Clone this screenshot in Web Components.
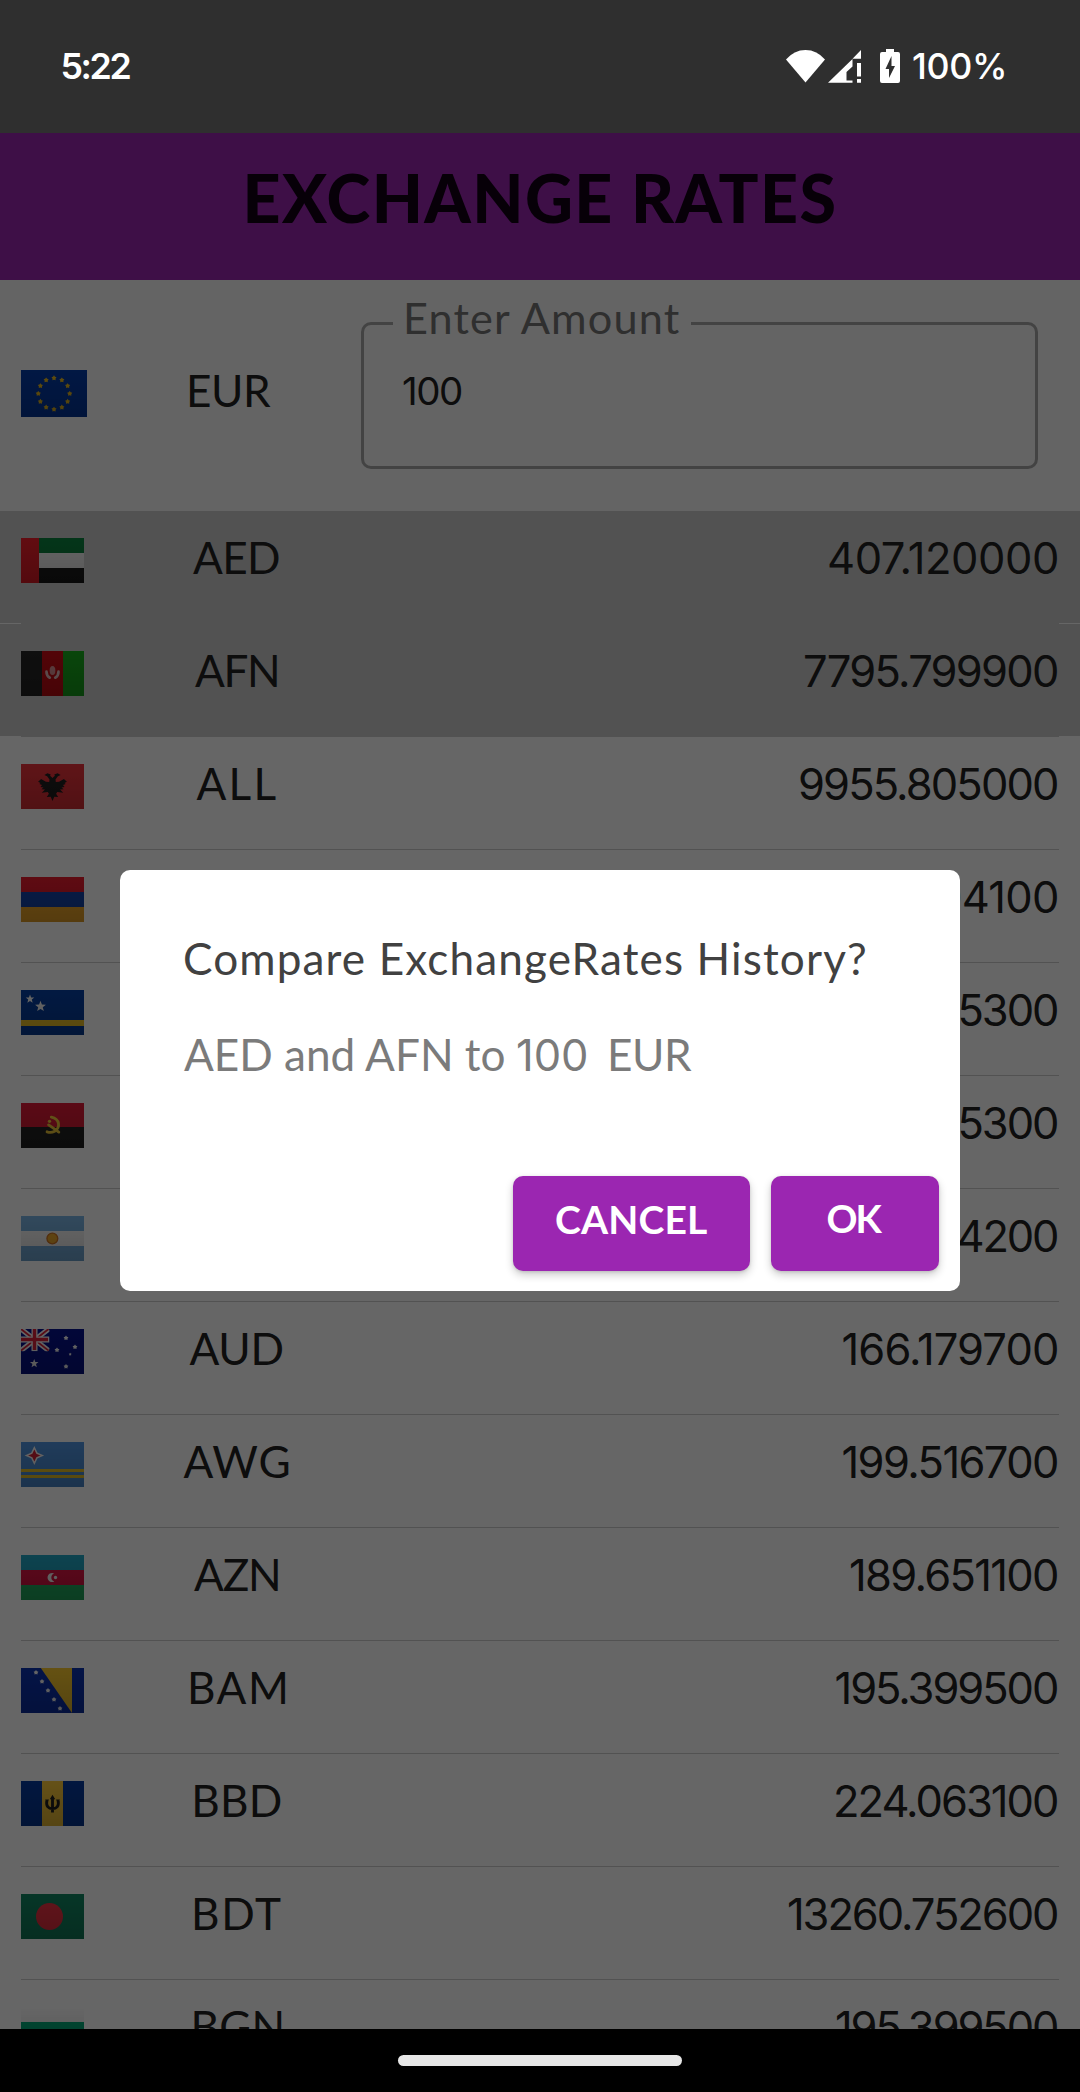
<!DOCTYPE html>
<html lang="en">
<head>
<meta charset="utf-8">
<title>Exchange Rates</title>
<style>
html,body{margin:0;height:2092px;overflow:hidden;background:#000;font-family:Lato,"Open Sans",sans-serif;color:#212121}
</style>
</head>
<body>
<app-screen></app-screen>
<script>
const make = (tag, html, setup) => customElements.define(tag, class extends HTMLElement {
  connectedCallback() {
    if (this.shadowRoot) return;
    const root = this.attachShadow({mode: 'open'});
    root.innerHTML = typeof html === 'function' ? html(this) : html;
    if (setup) setup(this, root);
  }
});

// A line of text set to a given ink width and cap height.
const pen = document.createElement('canvas').getContext('2d');
const CAPS = {Lato: 0.7165, Inter: 0.727};
make('type-line', '<style>:host{display:block;flex:none;white-space:pre}span{display:block;white-space:pre;width:max-content;font-kerning:normal}</style><span></span>', (el, root) => {
  const face = el.getAttribute('face') || 'Lato';
  const weight = el.getAttribute('weight') || '400';
  const cap = +el.getAttribute('cap') || 31.6;
  const width = +el.getAttribute('w');
  const size = cap / CAPS[face];
  const text = el.getAttribute('text');
  const span = root.querySelector('span');
  span.textContent = text;
  pen.font = `${weight} ${size}px ${face}`;
  const m = pen.measureText(text);
  const ink = m.actualBoundingBoxLeft + m.actualBoundingBoxRight;
  const gap = (width - ink) / (text.length - 1);
  const asc = m.fontBoundingBoxAscent, desc = m.fontBoundingBoxDescent;
  const base = (cap - asc - desc) / 2 + asc;
  Object.assign(el.style, {width: width + 'px', height: cap + 'px'});
  span.style.cssText = `font:${weight} ${size}px/${cap}px ${face},sans-serif;letter-spacing:${gap}px;transform:translate(${m.actualBoundingBoxLeft}px,${cap - base}px)`;
});

const band = (c, x, y, w, h) => `<rect x="${x}" y="${y}" width="${w}" height="${h}" fill="${c}"/>`;
const star = (x, y, r, c = '#fff', inner = .42) => {
  let p = '';
  for (let i = 0; i < 10; i++) {
    const a = Math.PI * i / 5, k = i % 2 ? r * inner : r;
    p += `${(x + k * Math.sin(a)).toFixed(2)},${(y - k * Math.cos(a)).toFixed(2)} `;
  }
  return `<polygon points="${p}" fill="${c}"/>`;
};
const ring = () => {
  let s = '';
  for (let i = 0; i < 12; i++) {
    const a = Math.PI * i / 6;
    s += star(10.5 + 5 * Math.sin(a), 7.55 - 5 * Math.cos(a), .85, '#f0c022', .62);
  }
  return s;
};
const FLAGS = {
  EUR: band('#043caa', 0, 0, 21, 15) + ring(),
  AED: band('#0b8540', 0, 0, 21, 5) + band('#fff', 0, 5, 21, 5) + band('#1c1c1c', 0, 10, 21, 5) + band('#f51f2b', 0, 0, 6, 15),
  AFN: band('#262626', 0, 0, 7, 15) + band('#cf0c14', 7, 0, 7, 15) + band('#18ae1d', 14, 0, 7, 15) + '<ellipse cx="10.5" cy="6.5" rx=".95" ry="1.5" fill="#e89a9d"/><path d="M8.5 6.9Q8.5 8.3 9.6 8.9M12.5 6.9Q12.5 8.3 11.4 8.9" fill="none" stroke="#f1c9ca" stroke-width=".9" stroke-linecap="round"/>',
  ALL: band('#ee343c', 0, 0, 21, 15) + '<path d="M10.5 4.7L9.7 3.9 9.9 3.5 8.8 3.1 7.8 3.7 8.7 4.1 9.5 5.2 9.4 6 8.3 5.9 6.7 5 5.7 5.9 6.5 6.3 6.1 6.7 7 7 6.5 7.7 7.5 7.8 6.8 8.4 8 8.5 6.9 9.6 8.9 9.3 9.3 9.9 8.6 11 9.9 10.9 10.5 12.3 11.1 10.9 12.4 11 11.7 9.9 12.1 9.3 14.1 9.6 13 8.5 14.2 8.4 13.5 7.8 14.5 7.7 14 7 14.9 6.7 14.5 6.3 15.3 5.9 14.3 5 12.7 5.9 11.6 6 11.5 5.2 12.3 4.1 13.2 3.7 12.2 3.1 11.1 3.5 11.3 3.9Z" fill="#202020"/>',
  AMD: band('#ec1c2e', 0, 0, 21, 5) + band('#1747b0', 0, 5, 21, 5) + band('#fcb02c', 0, 10, 21, 5),
  ANG: band('#0640a4', 0, 0, 21, 15) + band('#ffd02c', 0, 10, 21, 2) + star(3, 3, 1.5) + star(6.5, 5.5, 1.9),
  AOA: band('#e21b37', 0, 0, 21, 8) + band('#252525', 0, 8, 21, 7) + '<path d="M10.1 4.7C13 5.3 13.2 8.2 11.2 9.4Q10 10.1 8.7 9.6M9.2 7.3Q10.7 8.3 12.6 9.7" fill="none" stroke="#ffd53e" stroke-width=".95" stroke-linecap="round"/><circle cx="9.5" cy="6.1" r=".55" fill="#ffd53e"/>',
  ARS: band('#7cb6e6', 0, 0, 21, 15) + band('#fff', 0, 5, 21, 5) + '<circle cx="10.45" cy="7.5" r="1.8" fill="#fbb42f" stroke="#db7c26" stroke-width=".45"/>',
  AUD: band('#07128e', 0, 0, 21, 15) + '<svg width="9.5" height="7.4" viewBox="0 0 9.5 7.4"><path d="M0 0L9.2 7.2M9.2 0L0 7.2" stroke="#fff" stroke-width="1.7"/><path d="M0 0L9.2 7.2M9.2 0L0 7.2" stroke="#e0233c" stroke-width=".6"/><path d="M4.5 0V7.4M0 3.5H9.5" stroke="#fff" stroke-width="2"/><path d="M4.5 0V7M0 3.5H9" stroke="#e0233c" stroke-width="1.15"/></svg>' + star(4.4, 11.5, 1.5) + star(15, 3, .85, '#fff', .62) + star(18, 6, .85, '#fff', .62) + star(12, 7, .85, '#fff', .62) + star(16.4, 8.4, .5, '#fff', .62) + star(15, 12.5, .85, '#fff', .62),
  AWG: band('#5196e2', 0, 0, 21, 15) + band('#fbd02c', 0, 9, 21, 1) + band('#fbd02c', 0, 11, 21, 1) + '<path d="M4.45 1.9L5.3 3.7 7.1 4.5 5.3 5.3 4.45 7.1 3.6 5.3 1.8 4.5 3.6 3.7Z" fill="#dc2339" stroke="#fff" stroke-width=".5"/>',
  AZN: band('#22a8c6', 0, 0, 21, 5) + band('#e41545', 0, 5, 21, 5) + band('#23b564', 0, 10, 21, 5) + '<path d="M11.1 6.2A1.5 1.5 0 1 0 11.1 8.8A1.35 1.35 0 0 1 11.1 6.2Z" fill="#fff"/><circle cx="11.5" cy="7.5" r=".55" fill="#fff"/>',
  BAM: band('#0c32b0', 0, 0, 21, 15) + '<path d="M6.6 0H17V15Z" fill="#fccb30"/>' + [0, 1, 2, 3, 4].map(i => star(5 + 2 * i, 1.5 + 3 * i, .85, '#fff', .62)).join(''),
  BBD: band('#063a9e', 0, 0, 21, 15) + band('#fcca3c', 7, 0, 7, 15) + '<path d="M10.5 5.4V10.5M8.6 6.5C8.3 8.6 9.2 9.2 10.5 9.2S12.7 8.6 12.4 6.5" fill="none" stroke="#202020" stroke-width=".95"/><path d="M9.6 6.1L10.5 4.6 11.4 6.1ZM8 6.2L9.3 6.2 8.9 7.2ZM13 6.2L11.7 6.2 12.1 7.2Z" fill="#202020"/>',
  BDT: band('#118762', 0, 0, 21, 15) + '<circle cx="9.5" cy="7.5" r="4.5" fill="#f43445"/>',
  BGN: band('#fff', 0, 0, 21, 5) + band('#04b27e', 0, 5, 21, 5) + band('#e2202f', 0, 10, 21, 5)
};
make('flag-icon', el => `<style>:host{display:block;flex:none;width:63px;height:45px}:host([large]){width:66px;height:47px}svg{display:block}</style>
<svg width="100%" height="100%" viewBox="0 0 21 15" preserveAspectRatio="none"><defs><linearGradient id="g" x2="0" y2="1"><stop stop-opacity="0"/><stop offset="1" stop-opacity=".15"/></linearGradient></defs>${FLAGS[el.getAttribute('code')]}<rect width="21" height="15" fill="url(#g)"/></svg>`);

make('status-bar', `<style>
:host{display:flex;flex:none;height:133px;background:#2f2f2f;color:#fff;padding:0 76px 0 62.5px;box-sizing:border-box;justify-content:space-between}
.r{display:flex;align-items:flex-start;padding-top:49px}
.t{padding-top:53px}.p{padding:4px 0 0 12px}svg{display:block}</style>
<div class="t"><type-line text="5:22" w="68" cap="26" face="Inter" weight="600"></type-line></div>
<div class="r">
<svg width="118" height="35" viewBox="0 0 118 35" style="margin-right:-3px" fill="#fff">
<path d="M0 10.5Q8 1 19.5 1T39 10.5L19.5 33.5Z"/>
<path d="M42 33.8L66.5 10V17.5L60.5 23V31.5H66.5V33.8ZM75 1V9.7H66.5ZM71 14H75V27.5H71ZM71 30H75V33.8H71Z"/>
<path fill-rule="evenodd" d="M100 0H108V3H112Q114 3 114 5V32Q114 34 112 34H96Q94 34 94 32V5Q94 3 96 3H100ZM105.5 7L99.5 20H103V29L109 17H105.5Z"/>
</svg>
<div class="p"><type-line text="100%" w="91" cap="26" face="Inter" weight="500"></type-line></div></div>`);

make('app-header', `<style>:host{display:flex;flex:none;height:147px;box-sizing:border-box;padding:42.5px 0 0 2px;justify-content:center;background:#9b26b1;color:#120016}</style>
<type-line text="EXCHANGE RATES" w="587" cap="47.5" weight="900"></type-line>`);

make('amount-field', `<style>
:host{display:block;width:677px;height:180px}
fieldset{margin:0;padding:0 0 0 39px;box-sizing:border-box;width:677px;height:168px;min-width:0;border:3px solid #a8a8a8;border-radius:10px}
legend{margin-left:-10px;padding:1.6px 9px 0 13px;height:45px;color:#757575;box-sizing:border-box;width:298px}
.v{padding-top:31px}</style>
<fieldset><legend><type-line text="Enter Amount" w="276" cap="31"></type-line></legend><div class="v"><type-line text="100" w="58" cap="28" face="Inter"></type-line></div></fieldset>`);

make('base-currency', `<style>:host{display:flex;flex:none;height:231px;background:#fafafa;box-sizing:border-box;padding-left:21px}
flag-icon{margin-top:90px}.c{margin:95.8px 90px 0 103px}amount-field{margin-top:21px}</style>
<flag-icon large code="EUR"></flag-icon><type-line class="c" text="EUR" w="81"></type-line><amount-field></amount-field>`);

make('rate-row', el => {
  const label = el.getAttribute('label');
  return `<style>
:host{display:block;flex:none;height:113px}
.b{display:flex;height:112px;box-sizing:border-box;padding:27px 23px 0 21px}
:host([selected]) .b{background:#cdcdcd}
.c{width:306px;display:flex;justify-content:center;padding:5.4px ${label[0] === 'A' ? '2px 0 0' : '0 0 2px'};box-sizing:border-box}
.n{margin-left:auto;padding-top:5.2px}
hr{border:0;margin:0 21px;height:1px;background:#cdcdcd}</style>
<div class="b"><flag-icon code="${el.getAttribute('code')}"></flag-icon><div class="c">${label ? `<type-line text="${label}" w="${el.getAttribute('cw')}"></type-line>` : ''}</div><div class="n"><type-line face="Inter" text="${el.getAttribute('rate')}" w="${el.getAttribute('rw')}"></type-line></div></div><hr>`;
});

const RATES = [
  ['AED', 86, '407.120000', 228, 1], ['AFN', 82, '7795.799900', 252, 1], ['ALL', 79, '9955.805000', 257],
  ['AMD', 0, '04100', 120], ['ANG', 0, '5300', 96.5], ['AOA', 0, '5300', 96.5], ['ARS', 0, '4200', 98.5],
  ['AUD', 93, '166.179700', 213.5], ['AWG', 105, '199.516700', 213.5], ['AZN', 84, '189.651100', 206],
  ['BAM', 94, '195.399500', 220.5], ['BBD', 85.5, '224.063100', 221], ['BDT', 86, '13260.752600', 268], ['BGN', 87, '195.399500', 220]
];
make('rate-list', () => `<style>:host{display:flex;flex-direction:column;background:#fff;flex:1;min-height:0;overflow:hidden}</style>` +
  RATES.map(([c, cw, r, rw, s]) => `<rate-row code="${c}" label="${cw ? c : ''}" cw="${cw}" rate="${r}" rw="${rw}"${s ? ' selected' : ''}></rate-row>`).join(''));

make('raised-button', `<style>:host{display:flex;justify-content:center;box-sizing:border-box;height:95px;padding-top:29.5px;background:#9b26b1;color:#fff;border-radius:10px;box-shadow:0 4px 8px rgba(0,0,0,.2),0 1px 3px rgba(0,0,0,.12)}</style><slot></slot>`);

make('compare-dialog', `<style>
:host{display:flex;flex-direction:column;box-sizing:border-box;width:840px;height:421px;padding:74.2px 21px 20px 64px;background:#fff;border-radius:10px}
.t{color:#414141}.s{display:flex;color:#7b7b7b;margin-top:63.8px}
.a{display:flex;justify-content:flex-end;gap:21px;margin-top:auto}
.c{width:237px}.o{width:168px}</style>
<type-line class="t" text="Compare ExchangeRates History?" w="680" style="margin-left:1px"></type-line>
<div class="s"><type-line text="AED and AFN to" w="322"></type-line><type-line face="Inter" text="100" w="68" style="margin:0 25px 0 12px"></type-line><type-line text="EUR" w="81"></type-line></div>
<div class="a"><raised-button class="c"><type-line text="CANCEL" w="151" cap="28" weight="700"></type-line></raised-button>
<raised-button class="o"><type-line text="OK" w="55" cap="27.5" weight="700"></type-line></raised-button></div>`);

make('nav-bar', `<style>:host{display:flex;flex:none;height:63px;background:#000;justify-content:center;align-items:center}
i{display:block;width:284px;height:11px;border-radius:6px;background:#e6e6e6}</style><i></i>`);

make('app-screen', `<style>
:host{display:flex;flex-direction:column;width:1080px;height:2092px;overflow:hidden}
main{position:relative;display:flex;flex-direction:column;flex:1;min-height:0;overflow:hidden}
.scrim{position:absolute;inset:0;display:flex;justify-content:center;align-items:flex-start;padding-top:737px;background:rgba(0,0,0,.6)}</style>
<status-bar></status-bar>
<main><app-header></app-header><base-currency></base-currency><rate-list></rate-list>
<div class="scrim"><compare-dialog></compare-dialog></div></main>
<nav-bar></nav-bar>`);
</script>
</body>
</html>
